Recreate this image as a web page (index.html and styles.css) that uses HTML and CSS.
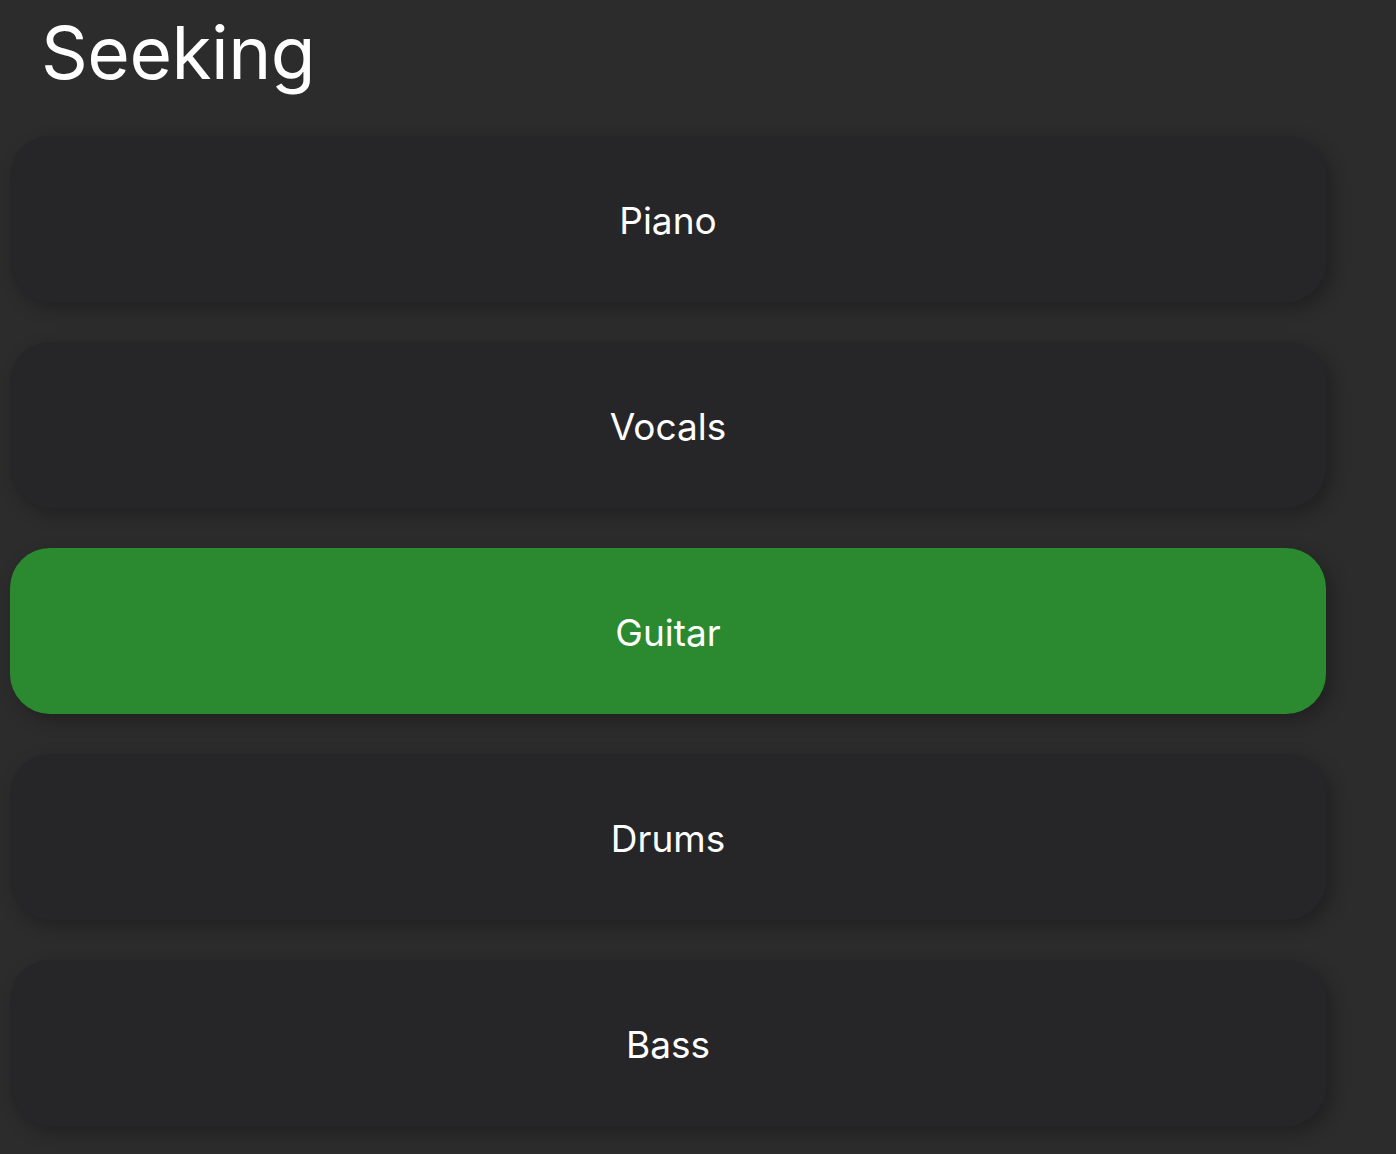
FILE: index.html
```html
<!DOCTYPE html>
<html lang="en">
<head>
<meta charset="utf-8">
<title>Seeking</title>
<link rel="stylesheet" href="styles.css">
</head>
<body>
<main class="page">
  <h1 class="title">Seeking</h1>
  <ul class="options">
    <li class="option">Piano</li>
    <li class="option">Vocals</li>
    <li class="option option--selected">Guitar</li>
    <li class="option">Drums</li>
    <li class="option">Bass</li>
  </ul>
</main>
</body>
</html>
```
FILE: styles.css
```css
html, body {
  margin: 0;
  padding: 0;
  background: #2c2c2c;
}
body {
  font-family: Inter, "Noto Sans", sans-serif;
  color: #ffffff;
}
.page {
  padding: 0 70px 40px 10px;
}
.title {
  margin: 0;
  padding: 6px 0 0 31px;
  font-size: 73px;
  font-weight: 400;
  line-height: 94px;
  letter-spacing: -0.5px;
}
.options {
  list-style: none;
  margin: 36px 0 0 0;
  padding: 0;
  display: flex;
  flex-direction: column;
  gap: 40px;
}
.option {
  height: 166px;
  border-radius: 40px;
  background: #262628;
  box-shadow: 6px 6px 18px rgba(0, 0, 0, 0.28);
  display: flex;
  align-items: center;
  justify-content: center;
  padding-top: 3px;
  box-sizing: border-box;
  font-size: 37px;
  font-weight: 400;
}
.option--selected {
  background: #2b8a2f;
}
```
